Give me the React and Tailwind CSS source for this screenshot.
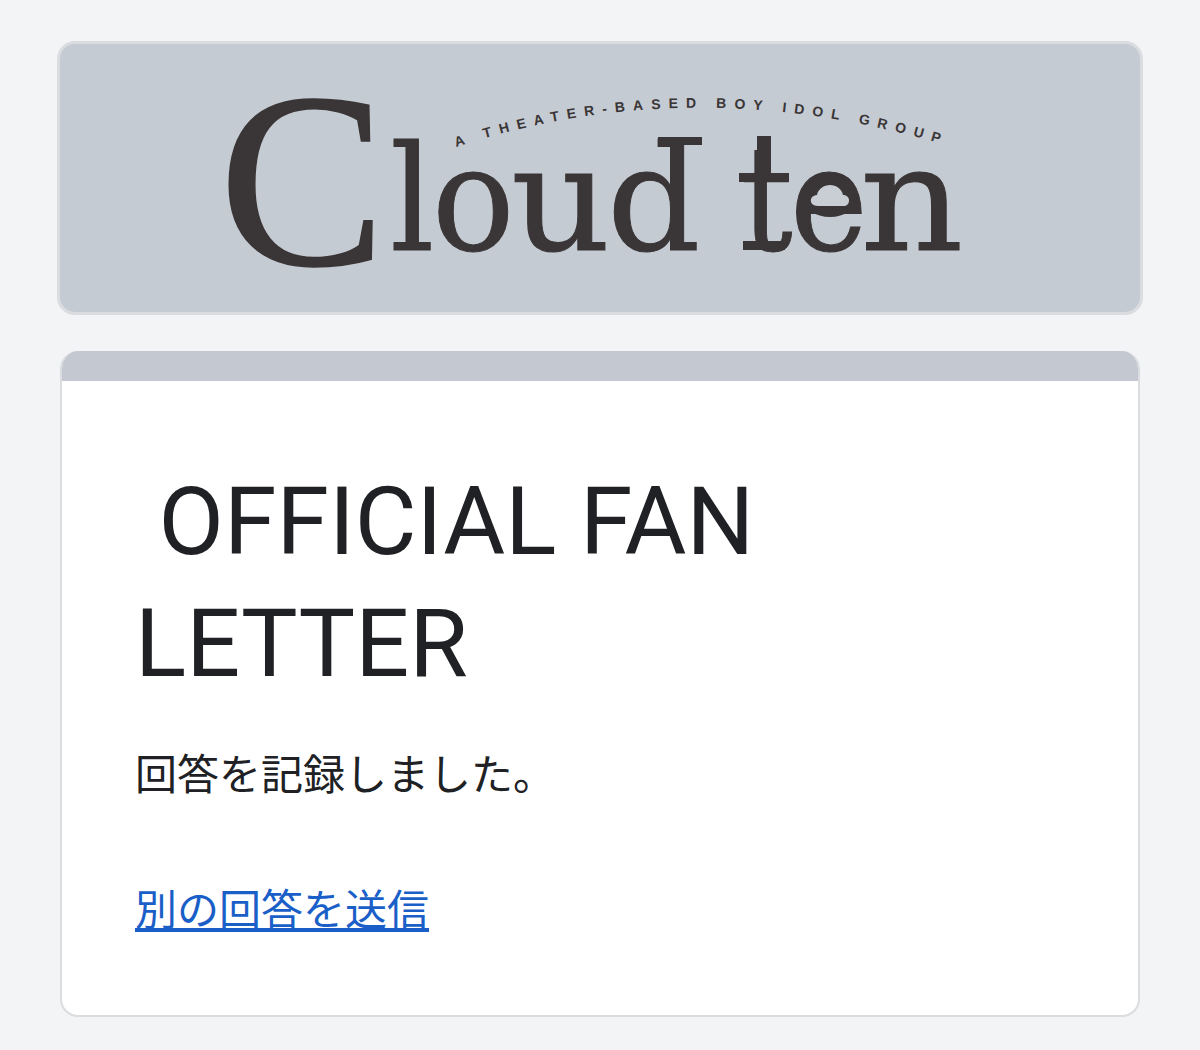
const Glyph = ({ c, x, y = 190, sx = 1, size = 146 }) => (
  <text transform={`translate(${x} ${y}) scale(${sx} 1)`} fontSize={size}>{c}</text>
);

const Logo = () => (
  <svg width="760" height="220" viewBox="0 0 760 220" className="block overflow-visible">
    <g fill="#3a3536">
      <text x="-4" y="205" fontSize="250" stroke="#3a3536" strokeWidth="1.5" style={{ fontFamily: '"Liberation Serif", serif' }}>C</text>
      <g stroke="#3a3536" strokeWidth="1" style={{ fontFamily: '"DejaVu Serif", serif' }}>
        <Glyph c="l" x={167} sx={0.95} />
        <Glyph c="o" x={209} sx={0.94} />
        <Glyph c="u" x={288} sx={1.06} />
        <Glyph c="d" x={384} sx={1} />
        <Glyph c="t" x={518} sx={0.88} />
        <Glyph c="e" x={567} sx={0.9} />
        <Glyph c="n" x={637} sx={1.1} />
      </g>
      <ellipse cx="607" cy="137" rx="27" ry="20" />
      <rect x="435" y="77" width="44" height="8" />
      <rect x="534" y="76" width="14" height="40" />
      <rect x="516" y="113" width="50" height="9" />
      <rect x="520" y="181" width="42" height="9" />
    </g>
    <path d="M595 146c-5 0-8-3-7-7 1-3 4-4 6-4 1-6 7-10 13-10s12 4 13 10c3 0 6 2 6 5 0 4-2 6-6 6z" fill="#c9ced5" />
    <path id="arc" d="M233 87 Q 480 6, 745 92" fill="none" />
    <text fontSize="14" fontWeight="700" fill="#3a3536" letterSpacing="8" style={{ fontFamily: '"Liberation Sans", sans-serif' }}>
      <textPath href="#arc">A THEATER-BASED BOY IDOL GROUP</textPath>
    </text>
  </svg>
);

export default function App() {
  return (
    <div className="min-h-[1050px] bg-[#f3f4f6] px-[57px] pt-[41px] font-['Roboto','Noto_Sans_CJK_JP',sans-serif] overflow-hidden">
      <div className="h-[274px] rounded-[18px] border-[3px] border-[#dadce0] bg-[#c5cbd3] flex items-start justify-center pl-[6px] pt-[16px]">
        <Logo />
      </div>
      <div className="mx-[3px] mt-[36px] h-[666px] rounded-[18px] overflow-hidden bg-white border-x-[2px] border-b-[2px] border-[#dadce0] flex flex-col">
        <div className="h-[30px] -mx-[2px] bg-[#c4c9d1] shrink-0" />
        <div className="pl-[73px] pt-[80px]">
          <h1 className="text-[95px] leading-[122px] text-[#202124] font-normal whitespace-pre">{"\u00a0OFFICIAL FAN\nLETTER"}</h1>
          <p className="mt-[41px] text-[42px] leading-[60px] text-[#202124]">回答を記録しました。</p>
          <a href="#" className="mt-[75px] block text-[42px] leading-[60px] text-[#1a5fc8] underline">別の回答を送信</a>
        </div>
      </div>
    </div>
  );
}
